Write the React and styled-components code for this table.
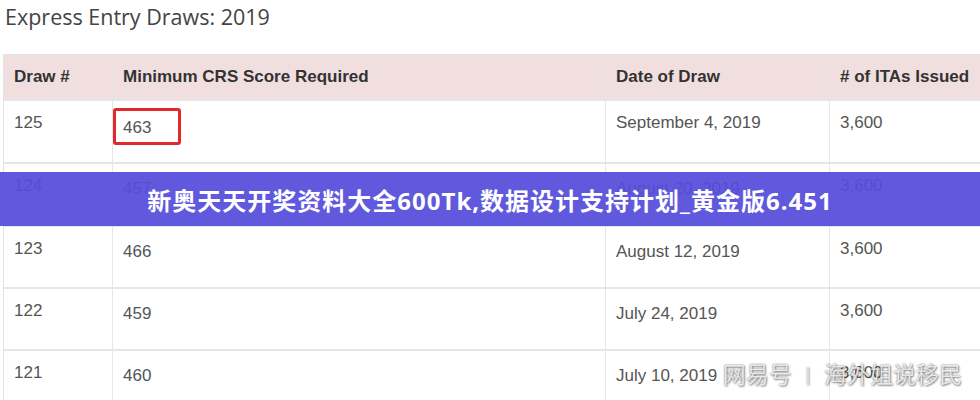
import React from "react";
import styled, { createGlobalStyle } from "styled-components";

const GlobalStyle = createGlobalStyle`
  html, body {
    margin: 0;
    padding: 0;
    background: #ffffff;
    overflow: hidden;
  }
`;

const Page = styled.div`
  position: relative;
  width: 980px;
  height: 400px;
  overflow: hidden;
  background: #ffffff;
`;

const Title = styled.h2`
  margin: 0;
  padding: 2px 0 0 5px;
  height: 54px;
  box-sizing: border-box;
  font-family: "Open Sans", "Liberation Sans", sans-serif;
  font-weight: 400;
  font-size: 21.5px;
  color: #444;
`;

const Table = styled.div`
  margin-left: 3px;
  width: 1000px;
  border-left: 1px solid #e2e2e2;
  border-top: 1px solid #e2e2e2;
  font-family: "Liberation Sans", Arial, sans-serif;
`;

const Row = styled.div`
  display: grid;
  grid-template-columns: 109px 493px 224px 1fr;
  height: ${(p) => p.$h}px;
  background: ${(p) => (p.$head ? "#f1dfe0" : "#ffffff")};
  border-bottom: 2px solid #e6e6e6;
  box-sizing: border-box;
`;

const HeadCell = styled.div`
  display: flex;
  align-items: center;
  padding-left: 10px;
  border-right: 1px solid #e6e6e6;
  font-size: 17px;
  font-weight: 700;
  color: #333;
`;

const Cell = styled.div`
  padding: ${(p) => (p.$low ? 15 : 12)}px 0 0 10px;
  border-right: 1px solid #e6e6e6;
  font-size: 17px;
  color: #555;
`;

const ScoreBox = styled.span`
  display: inline-block;
  margin: -8px 0 0 -10px;
  width: 68px;
  height: 37px;
  box-sizing: border-box;
  border: 3px solid #e2282a;
  border-radius: 3px;
  padding: 7px 0 0 7px;
`;

const Banner = styled.div`
  position: absolute;
  left: 0;
  right: 0;
  top: 172px;
  height: 54px;
  display: flex;
  align-items: center;
  justify-content: center;
  background: rgba(84, 76, 218, 0.93);
  color: #ffffff;
  font-family: "Noto Sans", "Noto Sans CJK SC", sans-serif;
  font-weight: 700;
  font-size: 24px;
  letter-spacing: 1px;
`;

const Watermark = styled.div`
  position: absolute;
  right: 18px;
  bottom: 10px;
  display: flex;
  align-items: center;
  gap: 14px;
  font-family: "Noto Sans CJK SC", sans-serif;
  font-size: 23px;
  color: rgba(250, 250, 250, 0.85);
  text-shadow: 0 0 2px rgba(0, 0, 0, 0.55), 1px 1px 2px rgba(0, 0, 0, 0.35);
`;

const Divider = styled.span`
  font-size: 16px;
`;

const draws = [
  { no: "125", score: "463", date: "September 4, 2019", itas: "3,600", h: 63, mark: true },
  { no: "124", score: "457", date: "August 20, 2019", itas: "3,600", h: 63 },
  { no: "123", score: "466", date: "August 12, 2019", itas: "3,600", h: 62 },
  { no: "122", score: "459", date: "July 24, 2019", itas: "3,600", h: 62 },
  { no: "121", score: "460", date: "July 10, 2019", itas: "3,600", h: 70 },
];

const App = () => (
  <Page>
    <GlobalStyle />
    <Title>Express Entry Draws: 2019</Title>
    <Table>
      <Row $head $h={46}>
        <HeadCell>Draw #</HeadCell>
        <HeadCell>Minimum CRS Score Required</HeadCell>
        <HeadCell>Date of Draw</HeadCell>
        <HeadCell># of ITAs Issued</HeadCell>
      </Row>
      {draws.map((d) => (
        <Row key={d.no} $h={d.h}>
          <Cell>{d.no}</Cell>
          <Cell $low>{d.mark ? <ScoreBox>{d.score}</ScoreBox> : d.score}</Cell>
          <Cell $low={!d.mark}>{d.date}</Cell>
          <Cell>{d.itas}</Cell>
        </Row>
      ))}
    </Table>
    <Banner>新奥天天开奖资料大全600Tk,数据设计支持计划_黄金版6.451</Banner>
    <Watermark>
      <span>网易号</span>
      <Divider>|</Divider>
      <span>海外姐说移民</span>
    </Watermark>
  </Page>
);

export default App;
